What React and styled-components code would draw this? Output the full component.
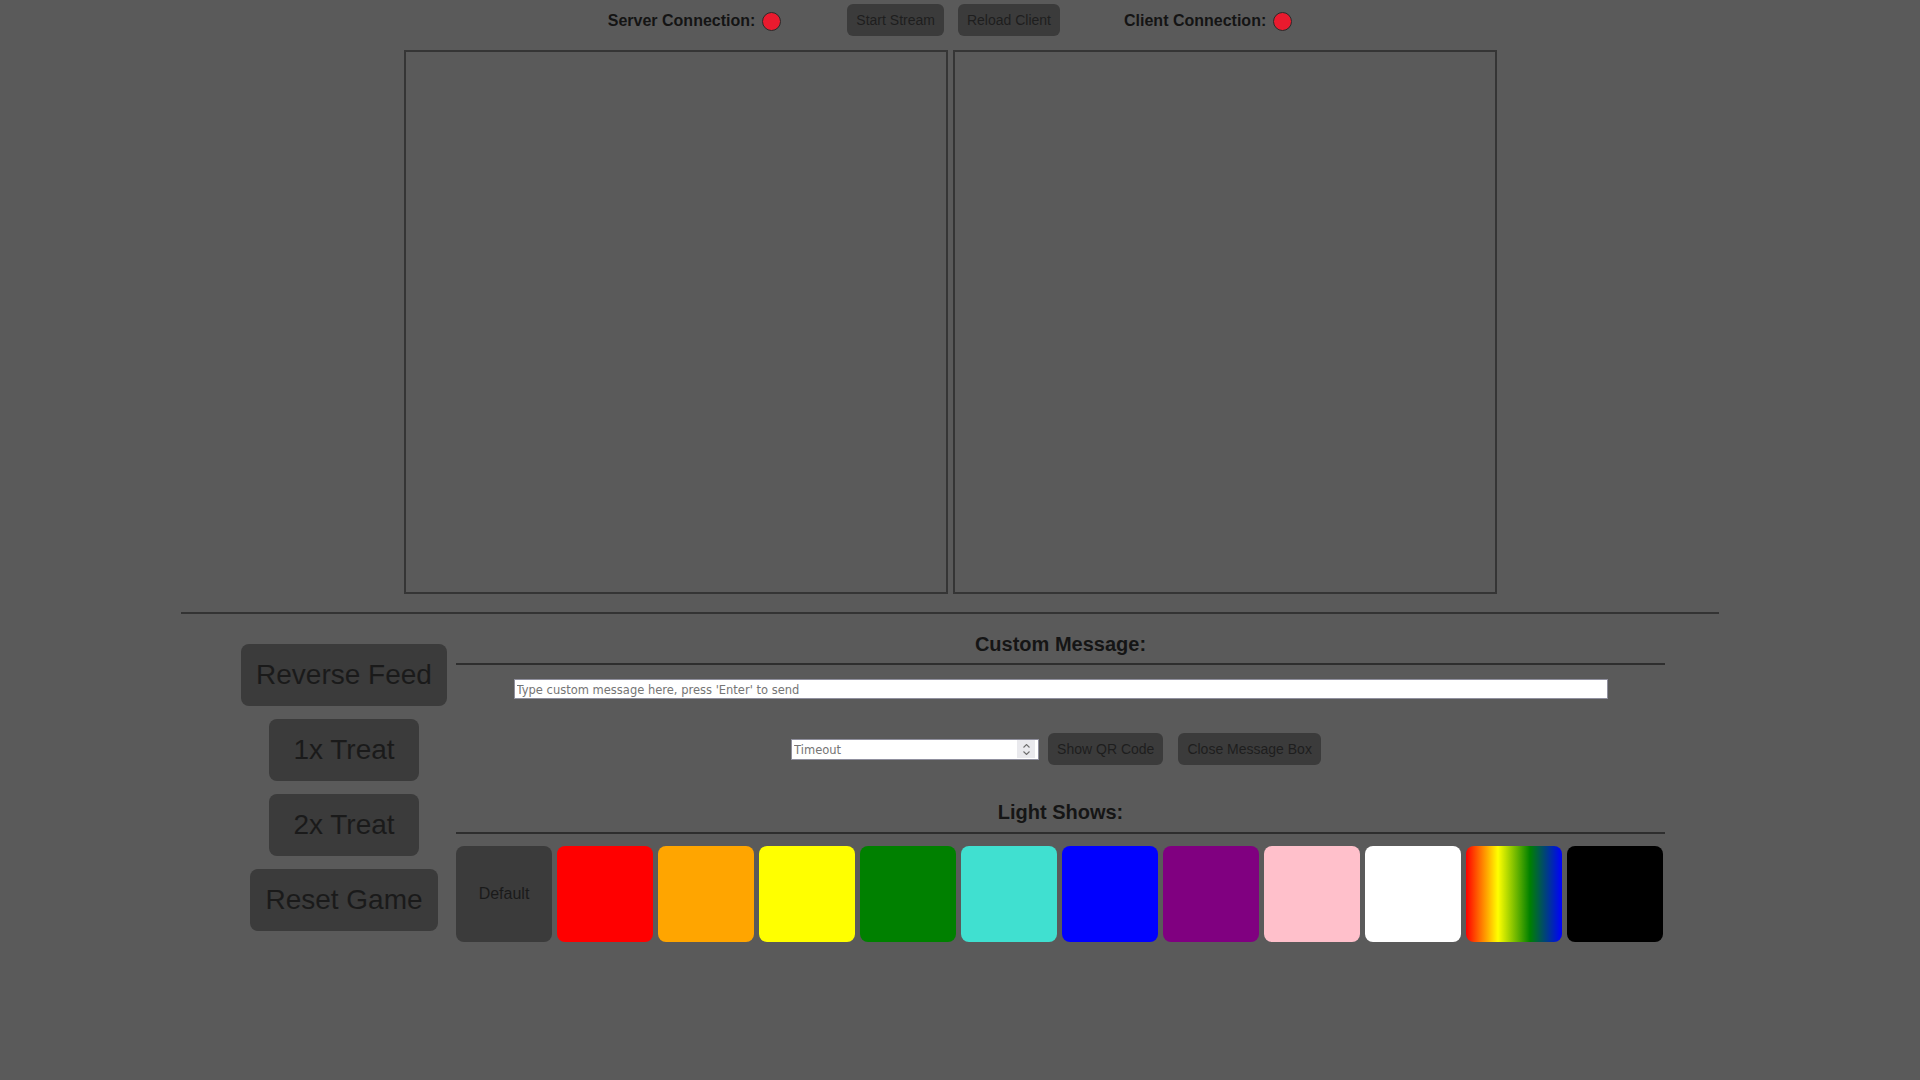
import React from "react";
import styled, { createGlobalStyle } from "styled-components";

const Global = createGlobalStyle`
  html, body {
    margin: 0;
    padding: 0;
    background: #5a5a5a;
    font-family: "Liberation Sans", Arial, sans-serif;
  }
  * { box-sizing: border-box; }
`;

const Page = styled.div`
  width: 1900px;
  min-height: 1080px;
  padding-top: 4px;
  color: #1a1a1a;
`;

const TopBar = styled.div`
  display: flex;
  justify-content: center;
  align-items: center;
  height: 32px;
`;

const Status = styled.div`
  display: flex;
  align-items: center;
  gap: 7px;
  margin-top: 2px;
`;

const StatusLabel = styled.span`
  font-size: 16px;
  font-weight: bold;
  color: #141414;
`;

const Dot = styled.span`
  width: 19px;
  height: 19px;
  border-radius: 50%;
  background: ${(p) => (p.$on ? "#2ecc40" : "#ea1a2e")};
  border: 1px solid #2a2a2a;
`;

const ButtonGroup = styled.div`
  display: flex;
  gap: 14px;
  margin: 0 64px 0 66px;
`;

const SmallButton = styled.button`
  font-family: "Liberation Sans", Arial, sans-serif;
  font-size: 14px;
  line-height: 16px;
  padding: 8px 9px;
  height: 32px;
  border: none;
  border-radius: 6px;
  background: #3b3b3b;
  color: #1e1e1e;
  cursor: pointer;
  margin-right: ${(p) => p.$mr || 0}px;
`;

const Feeds = styled.div`
  display: flex;
  justify-content: center;
  gap: 5px;
  margin-top: 14px;
`;

const FeedPanel = styled.div`
  width: 544px;
  height: 544px;
  border: 2px solid #353535;
`;

const Divider = styled.div`
  width: 1538px;
  margin: 18px auto 0;
  border-top: 2px solid #333;
`;

const Controls = styled.div`
  display: flex;
  justify-content: center;
  margin-top: 19px;
  padding-right: 3px;
`;

const LeftColumn = styled.div`
  width: 224px;
  padding-top: 11px;
  display: flex;
  flex-direction: column;
  align-items: center;
  gap: 13px;
`;

const BigButton = styled.button`
  font-family: "Liberation Sans", Arial, sans-serif;
  font-size: 28px;
  line-height: 32px;
  padding: 15px;
  min-width: 150px;
  border: none;
  border-radius: 8px;
  background: #3b3b3b;
  color: #1a1a1a;
  cursor: pointer;
`;

const RightColumn = styled.div`
  width: 1209px;
  display: flex;
  flex-direction: column;
  align-items: center;
`;

const SectionTitle = styled.h2`
  margin: ${(p) => p.$mt || 0}px 0 0;
  font-size: 20px;
  line-height: 23px;
  font-weight: bold;
  color: #151515;
`;

const SectionRule = styled.div`
  align-self: stretch;
  margin-top: ${(p) => p.$mt}px;
  border-top: 2px solid #2e2e2e;
`;

const MessageInput = styled.input`
  margin-top: 14px;
  width: 1094px;
  height: 20px;
  padding: 1px 2px 0;
  border: 1px solid #8f8f9d;
  background: #fff;
  font-family: "DejaVu Sans", sans-serif;
  font-size: 11.5px;
  color: #222;
  outline: none;
  &::placeholder { color: #757575; }
`;

const OptionsRow = styled.div`
  display: flex;
  align-items: center;
  margin-top: 34px;
  margin-left: -9px;
`;

const NumberBox = styled.div`
  width: 248px;
  height: 21px;
  display: flex;
  align-items: center;
  border: 1px solid #8f8f9d;
  background: #fff;
  padding: 0 3px 0 2px;
  margin-right: 9px;
`;

const NumberInput = styled.input`
  flex: 1;
  min-width: 0;
  border: none;
  outline: none;
  padding: 1px 0 0;
  font-family: "DejaVu Sans", sans-serif;
  font-size: 11.5px;
  background: transparent;
  &::placeholder { color: #757575; }
`;

const Spinner = styled.div`
  width: 18px;
  height: 18px;
  background: #e9e9ed;
  display: flex;
  flex-direction: column;
  align-items: center;
  justify-content: center;
  gap: 3px;
`;

const Tiles = styled.div`
  align-self: stretch;
  display: flex;
  gap: 5px;
  margin-top: 12px;
`;

const Tile = styled.button`
  width: 96px;
  height: 96px;
  border: none;
  border-radius: 8px;
  background: ${(p) => p.$bg};
  font-family: "Liberation Sans", Arial, sans-serif;
  font-size: 16px;
  color: #1a1a1a;
  cursor: pointer;
  padding: 0;
`;

const tileColors = [
  "#3b3b3b",
  "#ff0000",
  "#ffa500",
  "#ffff00",
  "#008000",
  "#40e0d0",
  "#0000ff",
  "#800080",
  "#ffc0cb",
  "#ffffff",
  "linear-gradient(to right, #ff0000, #ffff00, #008000, #0000ff)",
  "#000000",
];

const Chevron = ({ up }) => (
  <svg width="7" height="4" viewBox="0 0 7 4">
    <path
      d={up ? "M0.5 3.5 L3.5 0.5 L6.5 3.5" : "M0.5 0.5 L3.5 3.5 L6.5 0.5"}
      fill="none"
      stroke="#6e6e6e"
      strokeWidth="1.1"
    />
  </svg>
);

export default function App() {
  return (
    <>
      <Global />
      <Page>
        <TopBar>
          <Status>
            <StatusLabel>Server Connection:</StatusLabel>
            <Dot />
          </Status>
          <ButtonGroup>
            <SmallButton>Start Stream</SmallButton>
            <SmallButton>Reload Client</SmallButton>
          </ButtonGroup>
          <Status>
            <StatusLabel>Client Connection:</StatusLabel>
            <Dot />
          </Status>
        </TopBar>
        <Feeds>
          <FeedPanel />
          <FeedPanel />
        </Feeds>
        <Divider />
        <Controls>
          <LeftColumn>
            <BigButton>Reverse Feed</BigButton>
            <BigButton>1x Treat</BigButton>
            <BigButton>2x Treat</BigButton>
            <BigButton>Reset Game</BigButton>
          </LeftColumn>
          <RightColumn>
            <SectionTitle>Custom Message:</SectionTitle>
            <SectionRule $mt={7} />
            <MessageInput placeholder="Type custom message here, press 'Enter' to send" />
            <OptionsRow>
              <NumberBox>
                <NumberInput placeholder="Timeout" />
                <Spinner>
                  <Chevron up />
                  <Chevron />
                </Spinner>
              </NumberBox>
              <SmallButton $mr={15}>Show QR Code</SmallButton>
              <SmallButton>Close Message Box</SmallButton>
            </OptionsRow>
            <SectionTitle $mt={36}>Light Shows:</SectionTitle>
            <SectionRule $mt={8} />
            <Tiles>
              {tileColors.map((c, i) => (
                <Tile key={i} $bg={c}>
                  {i === 0 ? "Default" : null}
                </Tile>
              ))}
            </Tiles>
          </RightColumn>
        </Controls>
      </Page>
    </>
  );
}
